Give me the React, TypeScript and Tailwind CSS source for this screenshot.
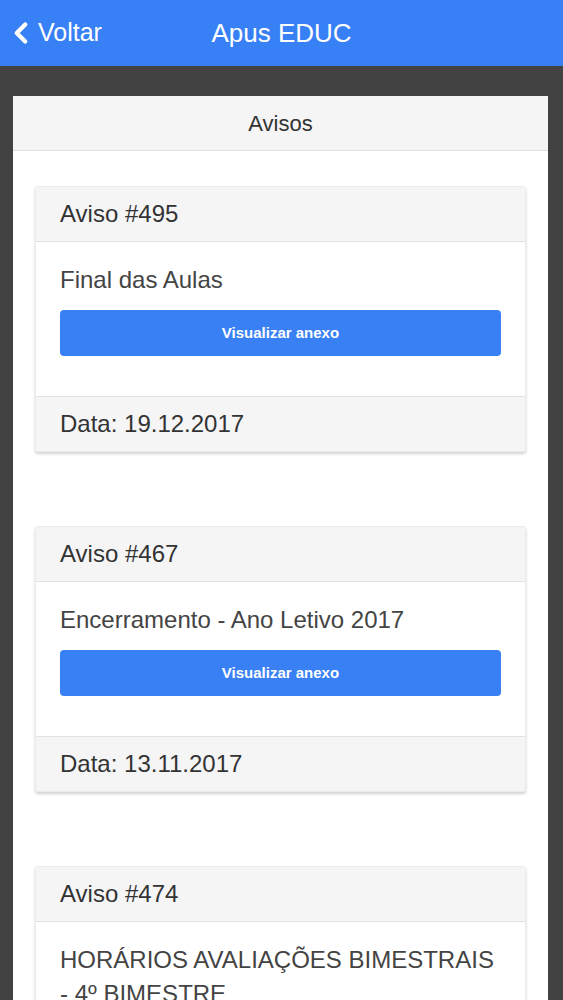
import { ChevronLeft } from 'lucide-react';

type Aviso = { id: number; titulo: string; data?: string; anexo?: boolean };

const avisos: Aviso[] = [
  { id: 495, titulo: 'Final das Aulas', data: '19.12.2017', anexo: true },
  { id: 467, titulo: 'Encerramento - Ano Letivo 2017', data: '13.11.2017', anexo: true },
  { id: 474, titulo: 'HORÁRIOS AVALIAÇÕES BIMESTRAIS - 4º BIMESTRE' },
];

function AvisoCard({ aviso }: { aviso: Aviso }) {
  return (
    <div className="bg-white rounded-[3px] shadow-[0_2px_3px_rgba(0,0,0,0.18)] border border-[#ececec] overflow-hidden">
      <div className="h-[55px] flex items-center px-6 bg-[#f5f5f6] border-b border-[#e2e2e2] text-[24px] text-[#333]">
        Aviso #{aviso.id}
      </div>
      <div className="px-6 pt-[21px] pb-[40px]">
        <p className="text-[24px] leading-[34px] text-[#444]">{aviso.titulo}</p>
        {aviso.anexo && (
          <button className="mt-[13px] w-full h-[46px] rounded-[4px] bg-[#3880f3] text-white text-[15px] font-bold">
            Visualizar anexo
          </button>
        )}
      </div>
      {aviso.data && (
        <div className="h-[55px] flex items-center px-6 bg-[#f5f5f6] border-t border-[#e2e2e2] text-[24px] text-[#333]">
          Data: {aviso.data}
        </div>
      )}
    </div>
  );
}

export default function App() {
  return (
    <div className="w-[563px] h-[1000px] overflow-hidden bg-[#424242] font-['Liberation_Sans',Arial,sans-serif]">
      <header className="h-[66px] bg-[#3880f5] relative flex items-center justify-center">
        <button className="absolute left-[4px] top-0 h-full flex items-center text-white text-[25px]">
          <ChevronLeft className="w-[34px] h-[40px]" strokeWidth={3} />
          <span>Voltar</span>
        </button>
        <h1 className="text-white text-[26px]">Apus EDUC</h1>
      </header>
      <main className="pl-[13px] pr-[15px] pt-[30px]">
        <div className="bg-white rounded-t-[2px]">
          <div className="h-[55px] flex items-center justify-center bg-[#f5f5f6] border-b border-[#e0e0e0] text-[22px] text-[#333]">
            Avisos
          </div>
          <div className="px-[22px] pt-[35px] pb-6 flex flex-col gap-[74px]">
            {avisos.map((a) => (
              <AvisoCard key={a.id} aviso={a} />
            ))}
          </div>
        </div>
      </main>
    </div>
  );
}
